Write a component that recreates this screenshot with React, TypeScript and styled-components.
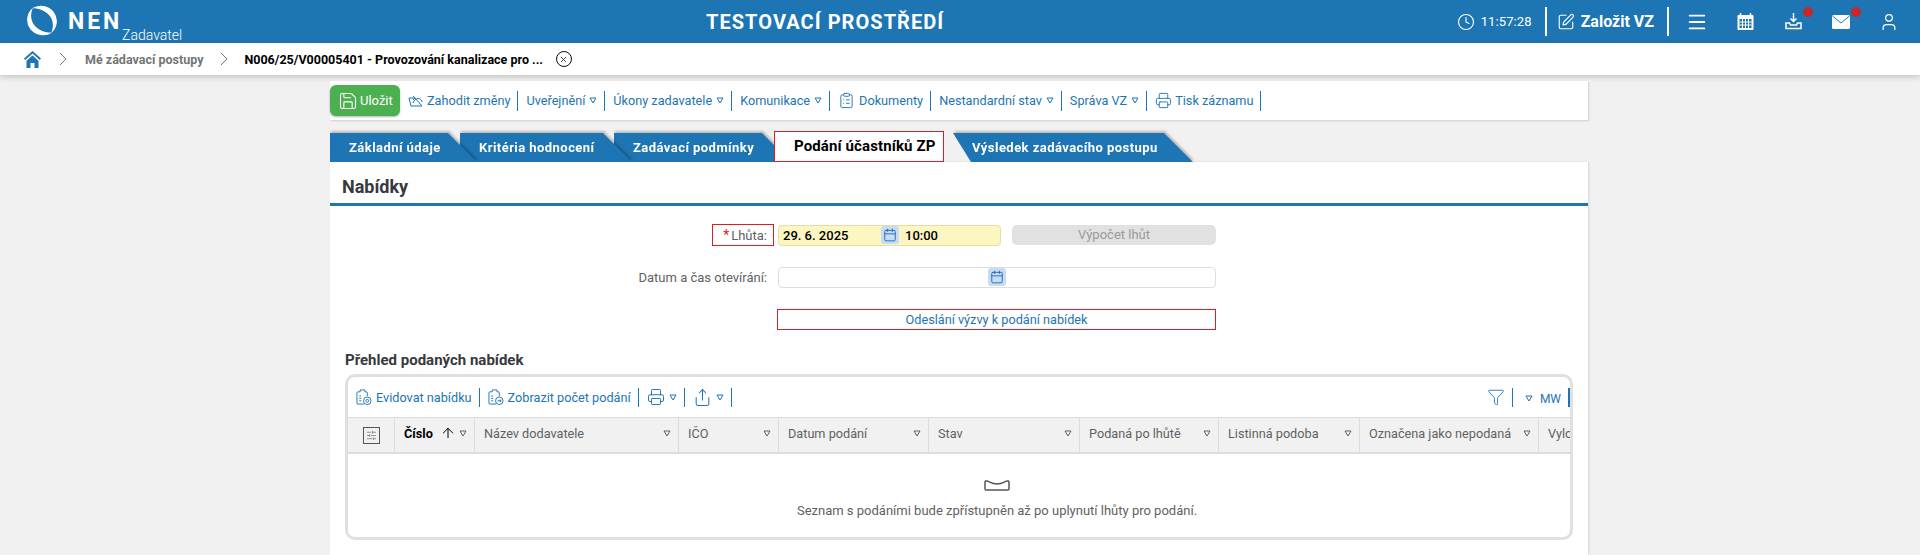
import * as React from 'react';
import styled, { createGlobalStyle } from 'styled-components';
import {
  ArrowUp,
  Calendar,
  ClipboardList,
  Clock,
  Funnel,
  Menu,
  Printer,
  Save,
  Share,
  SlidersHorizontal,
  SquarePen,
  User,
  X,
} from 'lucide-react';

const BLUE = '#1d75b3';

const GlobalStyle = createGlobalStyle`
  html, body {
    margin: 0;
    height: 555px;
    overflow: hidden;
    background: #f1f1f1;
    font-family: Roboto, "Liberation Sans", sans-serif;
    font-size: 13px;
  }
`;

const TopBar = styled.header`
  height: 43px;
  background: ${BLUE};
  color: #fff;
  display: flex;
  align-items: center;
`;
const Brand = styled.div`
  width: 706px;
  flex: none;
  height: 43px;
  padding: 5px 0 0 26px;
  box-sizing: border-box;
  display: flex;
  align-items: flex-start;
`;
const BrandName = styled.span`
  font-size: 23px;
  font-weight: 700;
  letter-spacing: 2.9px;
  margin: 2px 0 0 10px;
  line-height: 30px;
`;
const BrandRole = styled.span`
  font-size: 14px;
  font-weight: 300;
  line-height: 16px;
  margin: 22px 0 0 0;
`;
const EnvTitle = styled.div`
  font-size: 20px;
  font-weight: 700;
  letter-spacing: 1.05px;
  white-space: nowrap;
`;
const TopActions = styled.div`
  margin-left: auto;
  padding-right: 7px;
  display: flex;
  align-items: center;
  height: 43px;
`;
const ClockBox = styled.div`
  display: flex;
  align-items: center;
  gap: 6px;
  font-size: 13px;
  padding-right: 13px;
  letter-spacing: 0.1px;
`;
const TopSep = styled.div`
  width: 2px;
  height: 29px;
  background: #fff;
`;
const CreateBox = styled.div`
  display: flex;
  align-items: center;
  gap: 6px;
  font-size: 16px;
  font-weight: 700;
  padding: 0 13px 0 10px;
`;
const SlotGroup = styled.div`
  margin-left: 4px;
  display: flex;
`;
const IconSlot = styled.div`
  position: relative;
  width: 48px;
  height: 43px;
  display: flex;
  align-items: center;
  justify-content: center;
`;
const Dot = styled.span`
  position: absolute;
  top: 7px;
  left: 34px;
  width: 10px;
  height: 10px;
  border-radius: 50%;
  background: #c62828;
`;

const Crumbs = styled.nav`
  height: 32px;
  background: #fff;
  box-shadow: 0 2px 6px rgba(0, 0, 0, 0.2);
  display: flex;
  align-items: center;
  padding-left: 24px;
  font-size: 12.5px;
  font-weight: 700;
`;
const CrumbGap = styled.span<{ $w: number }>`
  width: ${(p) => p.$w}px;
  flex: none;
  display: flex;
  justify-content: center;
`;
const CrumbLink = styled.span`
  color: #757575;
`;
const CrumbCurrent = styled.span`
  color: #000;
`;
const CloseCircle = styled.span`
  width: 14px;
  height: 14px;
  border: 1px solid #111;
  border-radius: 50%;
  margin-left: 13px;
  display: flex;
  align-items: center;
  justify-content: center;
`;

const Page = styled.main`
  width: 1258px;
  margin: 6px 0 0 330px;
`;
const ActionBar = styled.div`
  height: 39px;
  background: #fff;
  box-shadow: 1px 1px 2px rgba(0, 0, 0, 0.15);
  display: flex;
  align-items: center;
  color: ${BLUE};
  font-size: 12.7px;
`;
const SaveButton = styled.button`
  width: 70px;
  height: 31px;
  padding: 0 0 0 8px;
  border: 0;
  border-radius: 6px;
  background: #4caf50;
  box-shadow: 0 1px 2px rgba(0, 0, 0, 0.3);
  color: #fff;
  font: inherit;
  font-size: 13px;
  display: flex;
  align-items: center;
  gap: 2px;
`;
const ActionItem = styled.div<{ $gap?: number }>`
  height: 20px;
  display: flex;
  align-items: center;
  gap: ${(p) => p.$gap ?? 4}px;
  padding: 0 7px 0 8px;
  border-right: 1px solid ${BLUE};
  white-space: nowrap;
`;

const TabRow = styled.div`
  height: 31px;
  margin-top: 11px;
  display: flex;
  align-items: flex-end;
`;
const TabWrap = styled.div<{ $z: number; $overlap: number }>`
  z-index: ${(p) => p.$z};
  margin-left: ${(p) => -p.$overlap}px;
  filter: drop-shadow(1px -2px 1px rgba(0, 0, 0, 0.22));
`;
const Tab = styled.div<{ $w: number; $left?: number }>`
  width: ${(p) => p.$w}px;
  height: 29px;
  box-sizing: border-box;
  padding-left: 19px;
  background: ${BLUE};
  color: #fff;
  font-weight: 700;
  font-size: 13px;
  letter-spacing: 0.45px;
  line-height: 30px;
  white-space: nowrap;
  clip-path: polygon(0 0, calc(100% - 29px) 0, 100% 100%, ${(p) => p.$left ?? 0}px 100%);
`;
const ActiveTab = styled.div`
  z-index: 9;
  width: 170px;
  height: 31px;
  margin: 0 9px 0 -17px;
  padding-left: 19px;
  box-sizing: border-box;
  border: 1px solid #e11b22;
  background: #fff;
  color: #000;
  font-weight: 700;
  font-size: 15px;
  letter-spacing: 0.12px;
  line-height: 29px;
  white-space: nowrap;
`;

const Card = styled.section`
  height: 393px;
  background: #fff;
  box-shadow: 1px 0 2px rgba(0, 0, 0, 0.12);
  overflow: hidden;
`;
const CardTitle = styled.h2`
  height: 41px;
  margin: 0;
  padding-left: 12px;
  border-bottom: 3px solid ${BLUE};
  color: #37393d;
  font-size: 18px;
  font-weight: 700;
  line-height: 50px;
`;
const FormRow = styled.div<{ $top: number }>`
  margin-top: ${(p) => p.$top}px;
  display: grid;
  grid-template-columns: 448px 223px 11px 204px;
  align-items: center;
`;
const Label = styled.div<{ $marked?: boolean }>`
  justify-self: end;
  height: 22px;
  margin-right: 4px;
  padding: 0 6px 0 ${(p) => (p.$marked ? 10 : 0)}px;
  box-sizing: border-box;
  display: flex;
  align-items: center;
  gap: 2px;
  border: 1px solid ${(p) => (p.$marked ? '#e11b22' : 'transparent')};
  color: #616161;
`;
const Star = styled.span`
  color: #e11b22;
  font-size: 14px;
`;
const DateField = styled.div`
  height: 21px;
  box-sizing: border-box;
  display: flex;
  align-items: center;
  padding-left: 4px;
  border: 1px solid #e6dca4;
  border-radius: 4px;
  background: #fdf6c1;
  color: #000;
  font-weight: 500;
`;
const DateValue = styled.span`
  width: 98px;
`;
const CalButton = styled.span`
  width: 18px;
  height: 18px;
  flex: none;
  border-radius: 3px;
  background: #c7dcf4;
  color: #1565b0;
  display: flex;
  align-items: center;
  justify-content: center;
`;
const TimeValue = styled.span`
  margin-left: 6px;
`;
const GrayButton = styled.div`
  grid-column: 4;
  height: 20px;
  border-radius: 5px;
  background: #e1e1e1;
  color: #9a9a9a;
  line-height: 20px;
  text-align: center;
`;
const EmptyField = styled.div`
  grid-column: 2 / 5;
  height: 21px;
  box-sizing: border-box;
  border: 1px solid #dedede;
  border-radius: 4px;
  display: flex;
  align-items: center;
  justify-content: center;
`;
const LinkField = styled.div`
  grid-column: 2 / 5;
  height: 21px;
  margin-left: -1px;
  box-sizing: border-box;
  border: 1px solid #e11b22;
  color: ${BLUE};
  font-size: 12.7px;
  line-height: 20px;
  text-align: center;
`;

const SubTitle = styled.h3`
  margin: 20px 0 0 15px;
  height: 20px;
  color: #37393d;
  font-size: 15px;
  font-weight: 700;
  line-height: 20px;
`;
const Panel = styled.div`
  width: 1228px;
  height: 166px;
  margin: 4px 0 0 15px;
  box-sizing: border-box;
  border: 3px solid #e0e0e0;
  border-radius: 10px;
  overflow: hidden;
`;
const GridTools = styled.div`
  height: 40px;
  display: flex;
  align-items: center;
  color: ${BLUE};
  font-size: 12.7px;
`;
const GridTool = styled.div`
  height: 19px;
  display: flex;
  align-items: center;
  gap: 4px;
  padding: 0 7px 0 8px;
  border-right: 1px solid ${BLUE};
  white-space: nowrap;
`;
const GridToolsEnd = styled.div`
  margin-left: auto;
  display: flex;
  align-items: center;
  height: 19px;
`;
const FunnelBox = styled.div`
  height: 19px;
  padding-right: 7px;
  border-right: 1px solid ${BLUE};
  display: flex;
  align-items: center;
`;
const WidthSwitch = styled.div`
  height: 19px;
  padding: 3px 7px 0 12px;
  box-sizing: border-box;
  border-right: 2px solid ${BLUE};
  display: flex;
  align-items: center;
  gap: 7px;
  font-size: 12px;
`;
const HeadRow = styled.div`
  height: 37px;
  display: flex;
  background: #f1f1f1;
  border-top: 1px solid #dcdcdc;
  border-bottom: 2px solid #dcdcdc;
  box-sizing: border-box;
  color: #616161;
  font-size: 12.7px;
`;
const HeadCell = styled.div<{ $w: number; $strong?: boolean }>`
  width: ${(p) => p.$w}px;
  flex: none;
  box-sizing: border-box;
  padding: 0 7px 4px 9px;
  border-right: 1px solid #dcdcdc;
  display: flex;
  align-items: center;
  justify-content: space-between;
  white-space: nowrap;
  overflow: hidden;
  color: ${(p) => (p.$strong ? '#000' : 'inherit')};
  font-weight: ${(p) => (p.$strong ? 700 : 400)};
`;
const SortMark = styled.span`
  display: flex;
  align-items: center;
  gap: 3px;
`;
const SettingsCell = styled.div`
  width: 47px;
  flex: none;
  box-sizing: border-box;
  border-right: 1px solid #dcdcdc;
  display: flex;
  align-items: center;
  justify-content: center;
`;
const SettingsIcon = styled.span`
  width: 15px;
  height: 15px;
  border: 1px solid #555;
  display: flex;
  align-items: center;
  justify-content: center;
  color: #555;
`;
const EmptyState = styled.div`
  padding: 26px 0 0 76px;
  display: flex;
  flex-direction: column;
  align-items: center;
  gap: 12px;
  color: #616161;
`;

const Tri = ({ color = BLUE }: { color?: string }) => (
  <svg width="8" height="7" viewBox="0 0 8 7" fill="none">
    <path d="M1 1h6L4 6z" stroke={color} strokeWidth="1" />
  </svg>
);

const Swoosh = () => <path d="M6 3.300A16 15.500 0 0 1 25 28.200C28 22 27.500 15 23 10 19 5.500 12 3 6 3.300z" />;

const Logo = () => (
  <svg width="32" height="31" viewBox="0 0 32 31" fill="#fff">
    <Swoosh />
    <g transform="rotate(180 16 15.500)">
      <Swoosh />
    </g>
  </svg>
);

const HomeIcon = () => (
  <svg width="17" height="17" viewBox="0 0 17 17" fill={BLUE}>
    <path d="M8.500 0 0 7.500 1.200 9 8.500 2.600 15.800 9 17 7.500z" />
    <path d="M8.500 4.500 2.500 9.700V17h4v-5h4v5h4V9.700z" />
  </svg>
);

const Chevron = () => (
  <svg width="8" height="14" viewBox="0 0 8 14" fill="none" stroke="#777" strokeWidth="1">
    <path d="M1 1l6 6-6 6" />
  </svg>
);

const CalendarFilled = () => (
  <svg width="17" height="17" viewBox="0 0 17 17">
    <rect x="0.500" y="2" width="16" height="15" rx="1" fill="#fff" />
    <path d="M3.500 0v3.500M13.500 0v3.500" stroke="#fff" strokeWidth="1.500" />
    <rect x="2.500" y="6" width="12" height="9" fill={BLUE} />
    <path d="M5.500 6v9M8.500 6v9M11.500 6v9M2.500 9h12M2.500 12h12" stroke="#fff" strokeWidth="1" />
  </svg>
);

const DownloadTray = () => (
  <svg width="17" height="17" viewBox="0 0 17 17" fill="none" stroke="#fff" strokeWidth="1.500">
    <path d="M8.500 0v8M5.500 5.500l3 3 3-3" />
    <path d="M1 10h3.500l1 2h6l1-2H16v5.500H1z" />
  </svg>
);

const MailFilled = () => (
  <svg width="18" height="14" viewBox="0 0 18 14">
    <rect width="18" height="14" rx="1.500" fill="#fff" />
    <path d="M0.500 1l8.500 7 8.500-7" fill="none" stroke={BLUE} strokeWidth="1" />
  </svg>
);

const EmptyTray = () => (
  <svg width="26" height="11" viewBox="0 0 26 11" fill="none" stroke="#555" strokeWidth="1.500">
    <path d="M1 2c0-1 1-1.200 2-1 3 .6 4 3 10 3s7-2.400 10-3c1-.2 2 0 2 1v7a1 1 0 0 1-1 1H2a1 1 0 0 1-1-1z" />
  </svg>
);

const ClipGear = ({ arrow }: { arrow?: boolean }) => (
  <svg width="16" height="18" viewBox="0 0 17 18" fill="none" stroke={BLUE} strokeWidth="1">
    <path d="M8.500 16.500H2a1 1 0 0 1-1-1V4.500a1 1 0 0 1 1-1h2.500V1.500h5v2H11a1 1 0 0 1 1 1V8" />
    <path d="M3.500 8h2M3.500 10.500h2M3.500 13h2" />
    <circle cx="12" cy="13" r="4" />
    {arrow ? <path d="M10 13h4M12.500 11.500l1.500 1.500-1.500 1.500" /> : <circle cx="12" cy="13" r="1.500" />}
  </svg>
);

const ResetIcon = () => (
  <svg width="15" height="12" viewBox="0 0 15 12" fill="none" stroke={BLUE} strokeWidth="1">
    <path d="M1 3h6l7 8H3L1 3z" />
    <path d="M5 8c1-3 4-5 6-4.500 2 .5 3 2 3 3.500" />
    <path d="M5 1l2 2-2 2" />
  </svg>
);

const columns = [
  { title: 'Název dodavatele', width: 204 },
  { title: 'IČO', width: 100 },
  { title: 'Datum podání', width: 150 },
  { title: 'Stav', width: 151 },
  { title: 'Podaná po lhůtě', width: 139 },
  { title: 'Listinná podoba', width: 141 },
  { title: 'Označena jako nepodaná', width: 179 },
];

export default function App() {
  return (
    <>
      <GlobalStyle />
      <TopBar>
        <Brand>
          <Logo />
          <BrandName>NEN</BrandName>
          <BrandRole>Zadavatel</BrandRole>
        </Brand>
        <EnvTitle>TESTOVACÍ PROSTŘEDÍ</EnvTitle>
        <TopActions>
          <ClockBox>
            <Clock size={18} strokeWidth={1.5} />
            11:57:28
          </ClockBox>
          <TopSep />
          <CreateBox>
            <SquarePen size={18} strokeWidth={1.5} />
            Založit VZ
          </CreateBox>
          <TopSep />
          <SlotGroup>
            <IconSlot>
              <Menu size={22} strokeWidth={2} />
            </IconSlot>
            <IconSlot>
              <CalendarFilled />
            </IconSlot>
            <IconSlot>
              <DownloadTray />
              <Dot />
            </IconSlot>
            <IconSlot>
              <MailFilled />
              <Dot />
            </IconSlot>
            <IconSlot>
              <User size={20} strokeWidth={1.5} />
            </IconSlot>
          </SlotGroup>
        </TopActions>
      </TopBar>

      <Crumbs>
        <HomeIcon />
        <CrumbGap $w={44}>
          <Chevron />
        </CrumbGap>
        <CrumbLink>Mé zádavací postupy</CrumbLink>
        <CrumbGap $w={41}>
          <Chevron />
        </CrumbGap>
        <CrumbCurrent>N006/25/V00005401 - Provozování kanalizace pro ...</CrumbCurrent>
        <CloseCircle>
          <X size={9} strokeWidth={2} color="#111" />
        </CloseCircle>
      </Crumbs>

      <Page>
        <ActionBar>
          <SaveButton>
            <Save size={20} strokeWidth={1.3} />
            Uložit
          </SaveButton>
          <ActionItem>
            <ResetIcon />
            Zahodit změny
          </ActionItem>
          <ActionItem>
            Uveřejnění
            <Tri />
          </ActionItem>
          <ActionItem>
            Úkony zadavatele
            <Tri />
          </ActionItem>
          <ActionItem>
            Komunikace
            <Tri />
          </ActionItem>
          <ActionItem>
            <ClipboardList size={17} strokeWidth={1.3} />
            Dokumenty
          </ActionItem>
          <ActionItem>
            Nestandardní stav
            <Tri />
          </ActionItem>
          <ActionItem>
            Správa VZ
            <Tri />
          </ActionItem>
          <ActionItem $gap={3}>
            <Printer size={17} strokeWidth={1.3} />
            Tisk záznamu
          </ActionItem>
        </ActionBar>

        <TabRow>
          <TabWrap $z={8} $overlap={0}>
            <Tab $w={147}>Základní údaje</Tab>
          </TabWrap>
          <TabWrap $z={7} $overlap={17}>
            <Tab $w={172}>Kritéria hodnocení</Tab>
          </TabWrap>
          <TabWrap $z={6} $overlap={18}>
            <Tab $w={177}>Zadávací podmínky</Tab>
          </TabWrap>
          <ActiveTab>Podání účastníků ZP</ActiveTab>
          <TabWrap $z={5} $overlap={0}>
            <Tab $w={240} $left={18}>
              Výsledek zadávacího postupu
            </Tab>
          </TabWrap>
        </TabRow>

        <Card>
          <CardTitle>Nabídky</CardTitle>
          <FormRow $top={18}>
            <Label $marked>
              <Star>*</Star>Lhůta:
            </Label>
            <DateField>
              <DateValue>29. 6. 2025</DateValue>
              <CalButton>
                <Calendar size={14} strokeWidth={1.5} />
              </CalButton>
              <TimeValue>10:00</TimeValue>
            </DateField>
            <GrayButton>Výpočet lhůt</GrayButton>
          </FormRow>
          <FormRow $top={20}>
            <Label>Datum a čas otevírání:</Label>
            <EmptyField>
              <CalButton>
                <Calendar size={14} strokeWidth={1.5} />
              </CalButton>
            </EmptyField>
          </FormRow>
          <FormRow $top={21}>
            <span />
            <LinkField>Odeslání výzvy k podání nabídek</LinkField>
          </FormRow>

          <SubTitle>Přehled podaných nabídek</SubTitle>
          <Panel>
            <GridTools>
              <GridTool>
                <ClipGear />
                Evidovat nabídku
              </GridTool>
              <GridTool>
                <ClipGear arrow />
                Zobrazit počet podání
              </GridTool>
              <GridTool>
                <Printer size={18} strokeWidth={1.3} />
                <Tri />
              </GridTool>
              <GridTool>
                <Share size={19} strokeWidth={1.3} />
                <Tri />
              </GridTool>
              <GridToolsEnd>
                <FunnelBox>
                  <Funnel size={18} strokeWidth={1.2} />
                </FunnelBox>
                <WidthSwitch>
                  <Tri />
                  MW
                </WidthSwitch>
              </GridToolsEnd>
            </GridTools>
            <HeadRow>
              <SettingsCell>
                <SettingsIcon>
                  <SlidersHorizontal size={11} strokeWidth={1.3} />
                </SettingsIcon>
              </SettingsCell>
              <HeadCell $w={80} $strong>
                Číslo
                <SortMark>
                  <ArrowUp size={16} strokeWidth={1.5} />
                  <Tri color="#616161" />
                </SortMark>
              </HeadCell>
              {columns.map((c) => (
                <HeadCell key={c.title} $w={c.width}>
                  {c.title}
                  <Tri color="#616161" />
                </HeadCell>
              ))}
              <HeadCell $w={80}>Vyloučena</HeadCell>
            </HeadRow>
            <EmptyState>
              <EmptyTray />
              Seznam s podáními bude zpřístupněn až po uplynutí lhůty pro podání.
            </EmptyState>
          </Panel>
        </Card>
      </Page>
    </>
  );
}
